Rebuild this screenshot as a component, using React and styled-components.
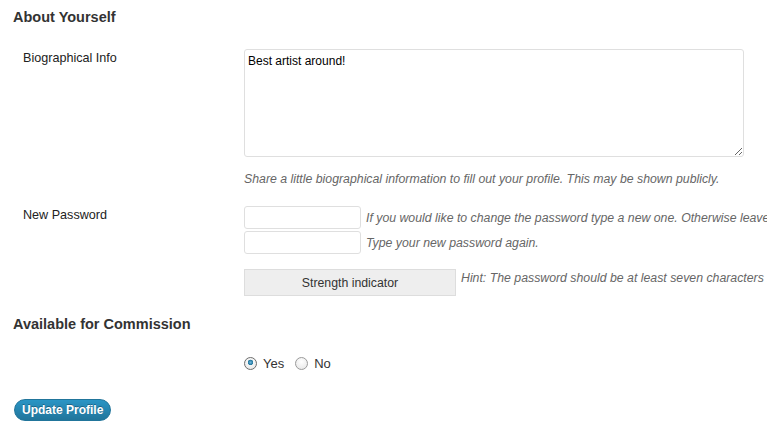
import React from "react";
import styled, { createGlobalStyle } from "styled-components";

const GlobalStyle = createGlobalStyle`
  html, body {
    margin: 0;
    padding: 0;
    background: #fff;
    overflow: hidden;
  }
  body {
    font-family: "Liberation Sans", Arial, sans-serif;
    font-size: 13px;
    color: #333;
  }
`;

const Page = styled.form`
  width: 767px;
  height: 426px;
  padding: 8px 0 0 13px;
  box-sizing: border-box;
  overflow: hidden;
`;

const SectionTitle = styled.h3`
  margin: 0 0 ${({ $gap }) => $gap}px;
  font-size: 14.5px;
  line-height: 18px;
  font-weight: bold;
  color: #333;
`;

const Row = styled.div`
  display: grid;
  grid-template-columns: 231px 1fr;
  margin-bottom: ${({ $gap }) => $gap}px;
`;

const Label = styled.label`
  padding-left: 10px;
  font-size: 12.6px;
  line-height: 18px;
  color: #222;
`;

const Field = styled.div`
  display: flex;
  flex-direction: column;
  min-width: 0;
`;

const TextArea = styled.textarea`
  width: 500px;
  height: 108px;
  box-sizing: border-box;
  border: 1px solid #dfdfdf;
  border-radius: 3px;
  padding: 3px 3px;
  font-family: "Liberation Sans", Arial, sans-serif;
  font-size: 12px;
  line-height: 17px;
  color: #000;
  resize: vertical;
  outline: none;
`;

const Description = styled.p`
  margin: ${({ $top }) => $top}px 0 0;
  font-size: 12.3px;
  line-height: 18px;
  font-style: italic;
  color: #666;
  white-space: nowrap;
`;

const InputLine = styled.div`
  display: flex;
  align-items: ${({ $align }) => $align || "center"};
  gap: 5px;
  margin-top: ${({ $top }) => $top || 0}px;
  white-space: nowrap;
`;

const TextInput = styled.input`
  width: 117px;
  height: 23px;
  box-sizing: border-box;
  border: 1px solid #dfdfdf;
  border-radius: 3px;
  background: #fff;
  flex: none;
  outline: none;
`;

const Hint = styled.span`
  font-size: 12.3px;
  line-height: 18px;
  font-style: italic;
  color: #666;
`;

const Strength = styled.div`
  width: 212px;
  height: 27px;
  box-sizing: border-box;
  flex: none;
  background: #eee;
  border: 1px solid #ddd;
  display: flex;
  align-items: center;
  justify-content: center;
  font-size: 12.3px;
  color: #333;
`;

const Choices = styled.div`
  display: flex;
  align-items: center;
  height: 18px;
  font-size: 13px;
  color: #333;
`;

const Choice = styled.label`
  display: flex;
  align-items: center;
  gap: 6px;
  margin-right: 11px;
`;

const Radio = styled.input.attrs({ type: "radio" })`
  appearance: none;
  margin: 0;
  width: 13px;
  height: 13px;
  border-radius: 50%;
  border: 1px solid #9a9a9a;
  box-sizing: border-box;
  background: radial-gradient(circle at 50% 35%, #fff 0%, #e4e4e4 100%);
  &:checked {
    background: radial-gradient(circle at 50% 40%, #6fb7dd 0, #21759b 2.5px, transparent 3px),
      radial-gradient(circle at 50% 35%, #fff 0%, #e4e4e4 100%);
    border-color: #6d6d6d;
  }
`;

const SubmitButton = styled.button`
  height: 22px;
  padding: 0 7px;
  margin-left: 1px;
  border: 1px solid #21759b;
  border-radius: 11px;
  background: linear-gradient(to bottom, #2a95c5, #21759b);
  color: #fff;
  font-family: "Liberation Sans", Arial, sans-serif;
  font-size: 12px;
  font-weight: bold;
  text-shadow: 0 -1px 0 rgba(0, 0, 0, 0.3);
  cursor: pointer;
`;

function App() {
  return (
    <>
      <GlobalStyle />
      <Page>
        <SectionTitle $gap={23}>About Yourself</SectionTitle>
        <Row $gap={18}>
          <Label>Biographical Info</Label>
          <Field>
            <TextArea defaultValue="Best artist around!" />
            <Description $top={13}>
              Share a little biographical information to fill out your profile. This may be shown publicly.
            </Description>
          </Field>
        </Row>
        <Row $gap={19}>
          <Label>New Password</Label>
          <Field>
            <InputLine>
              <TextInput type="password" />
              <Hint>If you would like to change the password type a new one. Otherwise leave this blank.</Hint>
            </InputLine>
            <InputLine $top={2}>
              <TextInput type="password" />
              <Hint>Type your new password again.</Hint>
            </InputLine>
            <InputLine $top={15} $align="flex-start">
              <Strength>Strength indicator</Strength>
              <Hint>
                Hint: The password should be at least seven characters long. To make it stronger, use upper and lower case letters.
              </Hint>
            </InputLine>
          </Field>
        </Row>
        <SectionTitle $gap={21}>Available for Commission</SectionTitle>
        <Row $gap={27}>
          <span />
          <Choices>
            <Choice>
              <Radio name="commission" defaultChecked />
              Yes
            </Choice>
            <Choice>
              <Radio name="commission" />
              No
            </Choice>
          </Choices>
        </Row>
        <SubmitButton type="button">Update Profile</SubmitButton>
      </Page>
    </>
  );
}

export default App;
